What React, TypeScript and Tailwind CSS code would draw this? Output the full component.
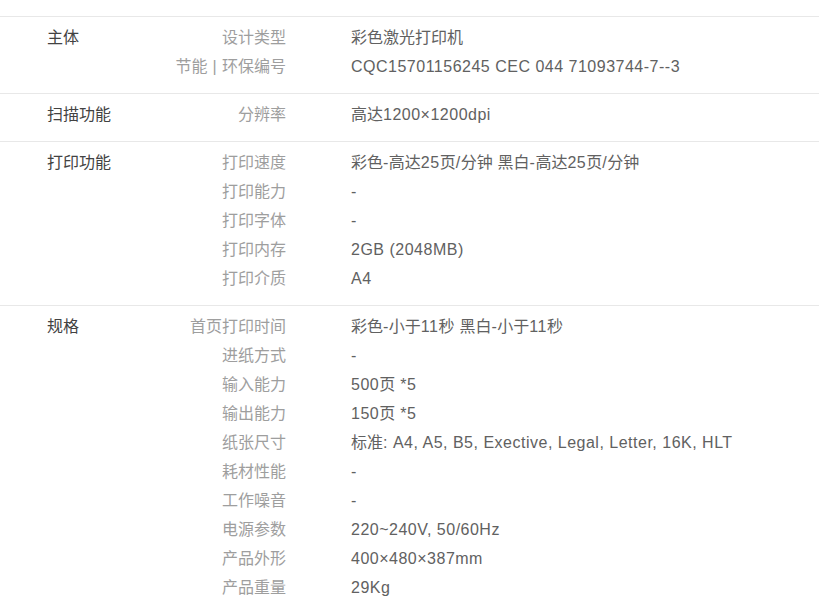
type Row = { k: string; v: string };
type Section = { title: string; rows: Row[] };

const sections: Section[] = [
  {
    title: "主体",
    rows: [
      { k: "设计类型", v: "彩色激光打印机" },
      { k: "节能 | 环保编号", v: "CQC15701156245 CEC 044 71093744-7--3" },
    ],
  },
  {
    title: "扫描功能",
    rows: [{ k: "分辨率", v: "高达1200×1200dpi" }],
  },
  {
    title: "打印功能",
    rows: [
      { k: "打印速度", v: "彩色-高达25页/分钟 黑白-高达25页/分钟" },
      { k: "打印能力", v: "-" },
      { k: "打印字体", v: "-" },
      { k: "打印内存", v: "2GB (2048MB)" },
      { k: "打印介质", v: "A4" },
    ],
  },
  {
    title: "规格",
    rows: [
      { k: "首页打印时间", v: "彩色-小于11秒 黑白-小于11秒" },
      { k: "进纸方式", v: "-" },
      { k: "输入能力", v: "500页 *5" },
      { k: "输出能力", v: "150页 *5" },
      { k: "纸张尺寸", v: "标准: A4, A5, B5, Exective, Legal, Letter, 16K, HLT" },
      { k: "耗材性能", v: "-" },
      { k: "工作噪音", v: "-" },
      { k: "电源参数", v: "220~240V, 50/60Hz" },
      { k: "产品外形", v: "400×480×387mm" },
      { k: "产品重量", v: "29Kg" },
    ],
  },
];

// latin runs in the reference are a touch wider than Liberation Sans, CJK is not
function Txt({ s }: { s: string }) {
  const parts = s.split(/([\u4e00-\u9fff]+)/).filter(Boolean);
  return (
    <>
      {parts.map((p, i) =>
        /[\u4e00-\u9fff]/.test(p) ? (
          <span key={i}>{p}</span>
        ) : (
          <span key={i} className="tracking-[0.5px]">
            {p}
          </span>
        )
      )}
    </>
  );
}

export default function App() {
  return (
    <div
      className="w-[819px] h-[601px] overflow-hidden bg-white pt-4 text-[16px]"
      style={{ fontFamily: '"Liberation Sans", Arial, "Noto Sans CJK SC", sans-serif' }}
    >
      {sections.map((s) => (
        <div key={s.title} className="flex border-t border-[#e8e8e8] pt-[11px] pb-[16px]">
          <div className="w-[47px] shrink-0" />
          <div className="w-[100px] shrink-0 leading-5 text-[#424242]">{s.title}</div>
          <div className="flex flex-col gap-[9px]">
            {s.rows.map((r) => (
              <div key={r.k} className="flex leading-5">
                <div className="w-[139px] shrink-0 text-right text-[#9e9e9e]">
                  <Txt s={r.k} />
                </div>
                <div className="pl-[65px] text-[#616161] whitespace-nowrap">
                  <Txt s={r.v} />
                </div>
              </div>
            ))}
          </div>
        </div>
      ))}
    </div>
  );
}
